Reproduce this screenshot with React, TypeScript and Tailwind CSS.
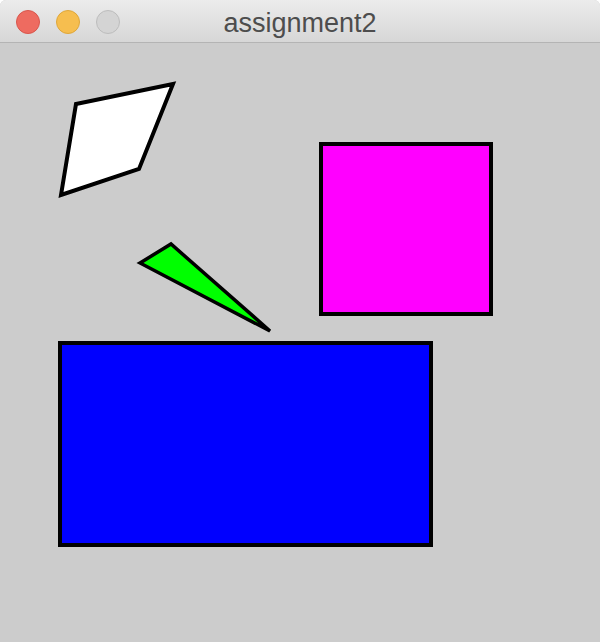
import React from "react";

export default function App() {
  return (
    <div className="w-[600px] h-[642px] bg-white">
      <div className="w-[600px] h-[642px] flex flex-col rounded-t-[6px] overflow-hidden bg-[#cccccc]">
        <div className="relative h-[43px] shrink-0 flex items-center justify-center bg-gradient-to-b from-[#ececec] to-[#d7d7d7] border-b border-[#b4b4b4]">
          <div className="absolute left-[16px] top-[10px] flex gap-[16px]">
            <div className="w-[24px] h-[24px] rounded-full bg-[#ee6b60] border border-[#d9564c]" />
            <div className="w-[24px] h-[24px] rounded-full bg-[#f6be4f] border border-[#dfa73a]" />
            <div className="w-[24px] h-[24px] rounded-full bg-[#d4d4d4] border border-[#bdbdbd]" />
          </div>
          <span
            className="text-[27px] leading-none text-[#4d4d4d] pt-[4px]"
            style={{ fontFamily: '"Liberation Sans", Arial, sans-serif' }}
          >
            assignment2
          </span>
        </div>
        <div className="flex-1 bg-[#cccccc]">
          <svg width="600" height="598" viewBox="0 0 600 598" className="block">
            <polygon
              points="76,61 173,41 139,126 61,152"
              fill="#ffffff"
              stroke="#000000"
              strokeWidth="4"
              strokeLinejoin="miter"
            />
            <polygon
              points="140,220 171,201 270,288"
              fill="#00ff00"
              stroke="#000000"
              strokeWidth="3.5"
              strokeLinejoin="miter"
            />
            <rect x="321" y="101" width="170" height="170" fill="#ff00ff" stroke="#000000" strokeWidth="4" />
            <rect x="60" y="300" width="371" height="202" fill="#0000ff" stroke="#000000" strokeWidth="4" />
          </svg>
        </div>
      </div>
    </div>
  );
}
